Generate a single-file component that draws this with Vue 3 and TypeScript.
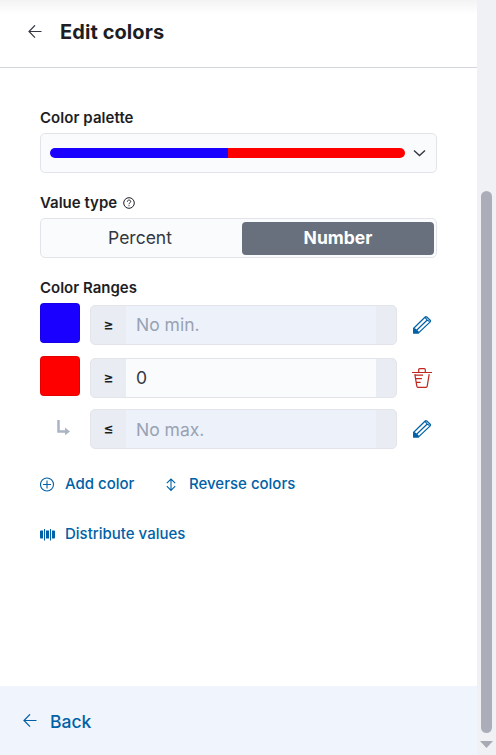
<script setup lang="ts">
import { ref } from 'vue'

type RangeRow = { kind: 'color' | 'end'; color: string; sign: string; text: string; auto: boolean }

const palette = ['#1a00ff', '#ff0000']
const valueTypes = ['Percent', 'Number']
const selected = ref('Number')
const rows: RangeRow[] = [
  { kind: 'color', color: 'blue', sign: '≥', text: 'No min.', auto: true },
  { kind: 'color', color: 'red', sign: '≥', text: '0', auto: false },
  { kind: 'end', color: '', sign: '≤', text: 'No max.', auto: true },
]
</script>

<template>
  <div class="page">
    <div class="panel">
      <header class="header">
        <svg class="arrow" width="14" height="14" viewBox="0 0 14 14"><path d="M7 .3L1 6.500l6 6.200M1 6.500h12.500" /></svg>
        <h2>Edit colors</h2>
      </header>

      <main class="body">
        <div class="label">Color palette</div>
        <div class="select">
          <div class="bar">
            <span v-for="c in palette" :key="c" :style="{ background: c }"></span>
          </div>
          <svg class="chevron" width="13" height="8" viewBox="0 0 13 8"><path d="M1 1.500l5.500 5L12 1.500" /></svg>
        </div>

        <div class="label label-type">
          <span>Value type</span>
          <svg width="12" height="12" viewBox="0 0 12 12">
            <circle cx="6" cy="6" r="5.300" />
            <path d="M4.300 4.700C4.400 2.500 7.700 2.600 7.700 4.600C7.700 5.800 6 5.800 6 7.200M6 8.200v1" />
          </svg>
        </div>
        <div class="group">
          <button v-for="t in valueTypes" :key="t" :class="{ active: selected === t }" @click="selected = t">{{ t }}</button>
        </div>

        <div class="label label-ranges">Color Ranges</div>
        <div class="rows">
          <div v-for="(row, i) in rows" :key="i" class="row" :class="row.kind">
            <div v-if="row.kind === 'color'" class="swatch" :class="row.color"></div>
            <div v-else class="turn">
              <svg width="14" height="16" viewBox="0 0 14 16"><path class="stem" d="M1.500 0v11.500h7" /><path class="tip" d="M8 7.500l5 4L8 15.200z" /></svg>
            </div>
            <div class="field">
              <span class="sign">{{ row.sign }}</span>
              <span class="value" :class="{ auto: row.auto }">{{ row.text }}</span>
              <span class="append"></span>
            </div>
            <svg v-if="row.auto" class="action pencil" width="20" height="20" viewBox="0 0 20 20">
              <path d="M1.700 13.200L13.200 2q.8-.8 1.600 0l3.400 3.300q.8.800 0 1.600L6.500 17.900H1.700zM4.600 15.200L15.500 4.700M13.200 2.700l1.800 2.200 2.500 1.600" />
              <path class="nib" d="M1.200 13l2.200.4 3.300 3.200.2 1.800H1.200z" />
            </svg>
            <svg v-else class="action trash" width="20" height="20" viewBox="0 0 20 20">
              <path d="M0 4.500h20M6.700 4V1.700q0-1 1-1h4.600q1 0 1 1V4M2.800 6.200l2 12q.2 1.200 1.200 1.200h8q1 0 1.200-1.200l2-12M3 7.200h8M3.700 10.700h6.200M4.300 14.400h4.300" />
            </svg>
          </div>
        </div>

        <div class="actions">
          <button class="link">
            <svg width="15" height="15" viewBox="0 0 15 15"><circle cx="7" cy="7.500" r="6.500" /><path d="M7 3.500v8M3 7.500h8" /></svg>
            <span>Add color</span>
          </button>
          <button class="link reverse">
            <svg width="15" height="15" viewBox="0 0 15 15"><path d="M7 2.200v11M2.800 6.200L7 2l4.200 4.200M2.800 9.200L7 13.400l4.200-4.200" /></svg>
            <span>Reverse colors</span>
          </button>
          <button class="link distribute">
            <svg class="solid" width="15" height="15" viewBox="0 0 15 15"><path d="M0 4.300q0-.8.800-.8H3v8H.8q-.8 0-.8-.8zM4 2h1v11.500H4zM6 3.500h3v8H6zM10 2h1v11.500h-1zM12 3.500h2.200q.8 0 .8.800v6.400q0 .8-.8.800H12z" /></svg>
            <span>Distribute values</span>
          </button>
        </div>
      </main>

      <footer class="footer">
        <svg class="arrow" width="14" height="14" viewBox="0 0 14 14"><path d="M7 .3L1 6.500l6 6.200M1 6.500h12.500" /></svg>
        <span>Back</span>
      </footer>
    </div>
    <div class="scroll">
      <div class="thumb"></div>
      <div class="down"></div>
    </div>
  </div>
</template>

<style>
body { overflow: hidden; }
</style>

<style scoped>
* { box-sizing: border-box; }
.page { display: flex; width: 496px; height: 755px; background: #fff; font-family: Inter, sans-serif; color: #1d1e24; }
.panel { display: flex; flex-direction: column; width: 477px; }
svg { display: block; flex: none; fill: none; stroke: currentColor; stroke-width: 1.2; }
button { border: 0; background: none; padding: 0; font-family: inherit; }
.header { display: flex; align-items: center; gap: 18px; height: 68px; padding: 0 28px 4px; border-bottom: 1px solid #d3d6df; background: linear-gradient(#f3f3f3, #fff 14px); }
.header .arrow { color: #343741; }
h2 { margin: 0; font-size: 20px; line-height: 24px; font-weight: 700; letter-spacing: .08px; }
.body { flex: 1; padding: 40px 40px 0; }
.label { height: 20px; font-size: 15px; line-height: 20px; font-weight: 600; letter-spacing: .06px; }
.select { display: flex; align-items: center; gap: 8px; width: 397px; height: 40px; margin-top: 5px; padding: 0 9px; border: 1px solid #e2e4ea; border-radius: 5px; background: #fafbfd; }
.bar { display: flex; width: 355px; height: 10px; border-radius: 5px; overflow: hidden; }
.bar span { flex: 1; }
.chevron { color: #343741; stroke-width: 1.4; }
.label-type { display: flex; align-items: center; gap: 6px; margin-top: 20px; letter-spacing: 0; }
.label-type svg { stroke-width: 1; }
.group { display: flex; width: 397px; height: 40px; margin-top: 5px; padding: 3px 2px; border: 1px solid #e2e4ea; border-radius: 5px; background: #fafbfd; }
.group button { width: 199px; height: 33px; margin-top: -.5px; padding-right: 5px; color: #343741; font-size: 17.500px; line-height: 32px; border-radius: 4px; }
.group button.active { width: 192px; padding-right: 0; background: #69707d; color: #fff; font-weight: 700; }
.label-ranges { margin-top: 20px; letter-spacing: 0; }
.rows { display: flex; flex-direction: column; margin-top: 5px; }
.row { display: flex; height: 42px; align-items: flex-end; margin-bottom: 11px; }
.row.end { height: 40px; }
.swatch { width: 40px; height: 40px; margin: 0 10px 2px 0; border: 1px solid #0000001a; border-radius: 4px; }
.blue { background: #1a00ff; }
.red { background: #f00; }
.turn { width: 50px; padding-left: 17px; padding-bottom: 13px; }
.turn svg { stroke: none; color: #abb4c4; }
.turn .stem { stroke: currentColor; stroke-width: 2.5; }
.turn .tip { fill: currentColor; }
.field { display: flex; width: 307px; height: 40px; border: 1px solid #e2e4ea; border-radius: 5px; overflow: hidden; background: #e9edf3; }
.sign { width: 35px; text-align: center; font-size: 15px; line-height: 38px; font-weight: 600; }
.value { width: 250px; padding-left: 10px; background: #fafbfd; color: #343741; font-size: 17.500px; line-height: 38px; }
.value.auto { background: #edf1fa; color: #98a2b3; }
.end .value { line-height: 40px; }
.append { flex: 1; }
.action { margin: 0 0 10px 15px; }
.pencil { color: #0061a6; }
.pencil .nib { fill: currentColor; stroke: none; }
.trash { color: #bd271e; }
.actions { display: grid; grid-template-columns: 124px 1fr; row-gap: 30px; margin-top: 14px; }
.link { display: flex; align-items: center; gap: 10px; height: 20px; color: #0061a6; font-size: 15px; line-height: 20px; font-weight: 500; white-space: nowrap; }
.link svg { stroke-width: 1.1; }
.link .solid { fill: currentColor; stroke: none; }
.footer { display: flex; align-items: center; gap: 13px; height: 69px; padding: 0 23px; background: #f0f4fc; color: #0061a6; font-size: 17.500px; font-weight: 500; }
.footer span { padding-top: 1px; }
.scroll { display: flex; flex-direction: column; width: 19px; padding-left: 4px; background: #eff1f5; }
.thumb { width: 11px; height: 542px; margin-top: 191px; border-radius: 6px; background: #abaeb9; }
.down { width: 13px; height: 7px; margin: 8px 0 0 -1px; background: #a7aab2; clip-path: polygon(0 0, 100% 0, 50% 100%); }
</style>
